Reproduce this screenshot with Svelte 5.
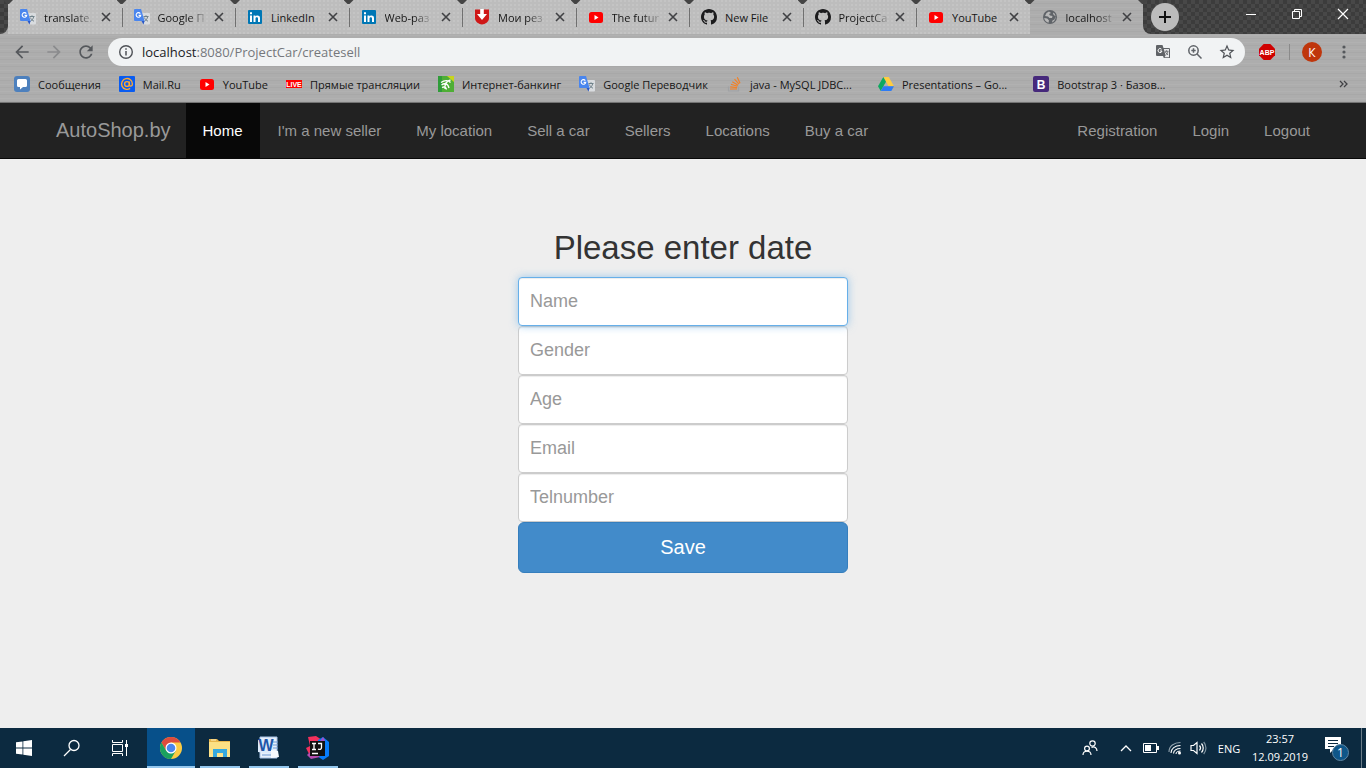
<script>
  const tabs = [
    { title: 'translate.', icon: 'translate', fade: true },
    { title: 'Google П', icon: 'translate', fade: true },
    { title: 'LinkedIn', icon: 'linkedin' },
    { title: 'Web-раз', icon: 'linkedin', fade: true },
    { title: 'Мои рез', icon: 'rabota', fade: true },
    { title: 'The futur', icon: 'youtube', fade: true },
    { title: 'New File', icon: 'github' },
    { title: 'ProjectCa', icon: 'github', fade: true },
    { title: 'YouTube', icon: 'youtube' },
    { title: 'localhost', icon: 'globe', fade: true, active: true }
  ];
  const bookmarks = [
    { title: 'Сообщения', icon: 'message' },
    { title: 'Mail.Ru', icon: 'mail' },
    { title: 'YouTube', icon: 'youtube' },
    { title: 'Прямые трансляции', icon: 'live' },
    { title: 'Интернет-банкинг', icon: 'bank' },
    { title: 'Google Переводчик', icon: 'translate' },
    { title: 'java - MySQL JDBC...', icon: 'stack', wide: true },
    { title: 'Presentations – Go...', icon: 'drive', wide: true },
    { title: 'Bootstrap 3 · Базов...', icon: 'bootstrap' }
  ];
  const links = ["I'm a new seller", 'My location', 'Sell a car', 'Sellers', 'Locations', 'Buy a car'];
  const account = ['Registration', 'Login', 'Logout'];
  const fields = ['Name', 'Gender', 'Age', 'Email', 'Telnumber'];
</script>

{#snippet icon(name)}
  <svg class="ico" viewBox="0 0 16 16" aria-hidden="true">
    {#if name === 'translate'}
      <path d="M6.500 4H15a1 1 0 0 1 1 1v9.500a1 1 0 0 1-1 1H10z" fill="#d9dcdf" />
      <path d="M9.500 7.500h5M12 6.300v1.200M10.300 8.500c.8 1.800 2.200 3 3.700 3.700M13.700 7.700c-.4 2-1.600 3.600-3.200 4.500" stroke="#71838b" stroke-width="1" fill="none" />
      <path d="M1 0h6l3.600 12H1a1 1 0 0 1-1-1V1a1 1 0 0 1 1-1z" fill="#4a86ee" />
      <path d="M7.500 12h3.100L9.500 15.500z" fill="#2a58c8" />
      <path d="M6.300 4.600a2.300 2.300 0 1 0 .4 1.800H4.600" stroke="#fff" stroke-width="1.100" fill="none" />
    {:else if name === 'linkedin'}
      <rect x="1" y="1" width="14" height="14" rx="1" fill="#0077b5" />
      <path d="M3 6.500h2V13H3zM3 3.200h2v2H3zM6.500 6.500h1.900v.9c.9-1.500 4.600-1.600 4.600 1.500V13h-2V9.500c0-1.900-2.500-1.700-2.500 0V13h-2z" fill="#fff" />
    {:else if name === 'rabota'}
      <path d="M1 .5h14V9c0 4-4 6.200-7 6.500C5 15.200 1 13 1 9z" fill="#cf1717" />
      <path d="M6.200 0h3.600v5H13L8 11 3 5h3.200z" fill="#fff" />
    {:else if name === 'youtube'}
      <rect x="1" y="3" width="14" height="11" rx="2.500" fill="#f00" />
      <path d="M6.500 6v5l4-2.500z" fill="#fff" />
    {:else if name === 'github'}
      <path fill="#1b1b1d" d="M8 0C3.580 0 0 3.580 0 8c0 3.540 2.290 6.530 5.470 7.590.4.070.55-.17.55-.38 0-.19-.01-.82-.01-1.490-2.010.37-2.530-.49-2.690-.94-.09-.23-.48-.94-.82-1.130-.28-.15-.68-.52-.01-.53.63-.01 1.080.58 1.230.82.72 1.210 1.870.87 2.330.66.070-.52.28-.87.51-1.070-1.780-.2-3.640-.89-3.640-3.950 0-.87.31-1.590.82-2.150-.08-.2-.36-1.020.08-2.120 0 0 .67-.21 2.200.82.64-.18 1.320-.27 2-.27.68 0 1.360.09 2 .27 1.530-1.040 2.200-.82 2.200-.82.44 1.100.16 1.920.08 2.120.51.56.82 1.270.82 2.150 0 3.070-1.870 3.750-3.650 3.950.29.25.54.73.54 1.480 0 1.070-.01 1.930-.01 2.200 0 .21.15.46.55.38A8.013 8.013 0 0 0 16 8c0-4.420-3.580-8-8-8z" />
    {:else if name === 'globe'}
      <circle cx="8" cy="8" r="7" fill="#5f6368" />
      <path d="M7 2.500 4.500 4 3 7l3 .5 1.500 1.500H10l.5-2-2.500-.5L7 5l2-1zM2.200 9l3 .5 1.800 2L6.500 13.800A6 6 0 0 1 2.200 9zM11.500 3.500 11 5l2.500 2.500-1 3-2 1L10 13.500a6 6 0 0 0 1.500-10z" fill="#b8b8b8" />
    {:else if name === 'message'}
      <rect width="16" height="16" rx="3" fill="#4d80bd" />
      <path d="M4.500 3h7A1.500 1.500 0 0 1 13 4.500v5a1.500 1.500 0 0 1-1.500 1.500H9l-3 2.500V11H4.500A1.500 1.500 0 0 1 3 9.500v-5A1.500 1.500 0 0 1 4.500 3z" fill="#fff" />
    {:else if name === 'mail'}
      <rect width="16" height="16" rx="1" fill="#0a5cf0" />
      <circle cx="8" cy="8" r="2.400" fill="none" stroke="#ffa930" stroke-width="1.400" />
      <path d="M10.400 5.500v3.300c0 1.900 3 1.900 3-.8a5.400 5.400 0 1 0-2.300 4.400" fill="none" stroke="#ffa930" stroke-width="1.400" />
    {:else if name === 'live'}
      <rect y="4" width="16" height="8" fill="#f00" />
      <text x="8" y="10.500" text-anchor="middle" font-size="7" font-weight="700" fill="#fff" font-family="Liberation Sans, sans-serif">LIVE</text>
    {:else if name === 'bank'}
      <rect width="16" height="16" fill="#4eae35" />
      <path d="M9 0h7v6z" fill="#c8d51c" />
      <path d="M0 0h4v16H0z" fill="#2f9c39" />
      <path d="M3 6.500c4-3 8-2 9.500 0M3.500 9C6 7 10 7 11 12M4 11.500c2-1 4-.5 4.500 2M12.500 4c-4 1-6 4-5.500 9" fill="none" stroke="#fff" stroke-width="1.300" />
    {:else if name === 'stack'}
      <path d="M2.500 10.500V15h10v-4.500" stroke="#a0a2a5" stroke-width="1.200" fill="none" />
      <path d="M4 13h7M4.200 10.800l6.900.8M4.900 8.300l6.600 2M6.300 5.700l5.800 3.500M8.500 3.200l4.500 5M11.300 1.200l2.700 6" stroke="#f48024" stroke-width="1.200" />
    {:else if name === 'drive'}
      <path d="M5.300 1h5.400L16 10.200h-5.400z" fill="#ffcd40" />
      <path d="M5.300 1 8 5.700 2.700 15 0 10.300z" fill="#0da960" />
      <path d="M5.400 10.300H16L13.300 15H2.700z" fill="#2d7bf4" />
    {:else if name === 'bootstrap'}
      <rect width="16" height="16" rx="2" fill="#46297b" />
      <text x="8" y="12.500" text-anchor="middle" font-size="12" font-weight="700" fill="#fff" font-family="Liberation Sans, sans-serif">B</text>
    {/if}
  </svg>
{/snippet}

<div class="screen">
  <header class="browser">
    <div class="strip">
      <div class="edge"></div>
      <div class="tabs">
        {#each tabs as tab}
          <div class="tab" class:active={tab.active}>
            {@render icon(tab.icon)}
            <span class="tab-title" class:fade={tab.fade}>{tab.title}</span>
            <button class="close" aria-label="Close tab">
              <svg width="16" height="16" viewBox="0 0 16 16"><path d="m4 4 8 8M12 4l-8 8" stroke="#404144" stroke-width="1.600" /></svg>
            </button>
          </div>
        {/each}
      </div>
      <div class="window-side">
        <button class="new-tab" aria-label="New tab">
          <svg width="14" height="14" viewBox="0 0 14 14"><path d="M7 1v12M1 7h12" stroke="#111" stroke-width="2" /></svg>
        </button>
        <div class="controls">
          <button aria-label="Minimize"><svg width="12" height="12" viewBox="0 0 12 12"><path d="M1 6.500h10" stroke="#fff" /></svg></button>
          <button aria-label="Restore"><svg width="12" height="12" viewBox="0 0 12 12"><path d="M1.500 3.500h7v7h-7zM3.500 3V1.500h7v7H9" fill="none" stroke="#fff" /></svg></button>
          <button aria-label="Close"><svg width="12" height="12" viewBox="0 0 12 12"><path d="m1 1 10 10M11 1 1 11" stroke="#fff" stroke-width="1.200" /></svg></button>
        </div>
      </div>
    </div>

    <div class="toolbar">
      <button class="tool" aria-label="Back"><svg width="20" height="20" viewBox="0 0 24 24"><path fill="#55585c" d="M20 11H7.830l5.590-5.590L12 4l-8 8 8 8 1.410-1.410L7.830 13H20z" /></svg></button>
      <button class="tool" aria-label="Forward"><svg width="20" height="20" viewBox="0 0 24 24"><path fill="#8a8b8d" d="m12 4-1.410 1.410L16.170 11H4v2h12.170l-5.580 5.590L12 20l8-8z" /></svg></button>
      <button class="tool" aria-label="Reload"><svg width="20" height="20" viewBox="0 0 24 24"><path fill="#55585c" d="M17.650 6.350C16.200 4.900 14.210 4 12 4c-4.420 0-7.990 3.580-7.990 8s3.570 8 7.990 8c3.730 0 6.840-2.550 7.730-6h-2.080c-.82 2.330-3.040 4-5.650 4-3.310 0-6-2.690-6-6s2.690-6 6-6c1.660 0 3.140.69 4.220 1.780L13 11h7V4z" /></svg></button>
      <div class="address">
        <svg width="16" height="16" viewBox="0 0 16 16"><circle cx="8" cy="8" r="6.300" fill="none" stroke="#4f5257" stroke-width="1.400" /><path d="M8 7v4.500M8 4.300v1.500" stroke="#4f5257" stroke-width="1.500" /></svg>
        <span class="url"><b>localhost</b>:8080/ProjectCar/createsell</span>
        <button class="tool" aria-label="Translate page"><svg width="16" height="16" viewBox="0 0 16 16"><path d="M2 1h5.500l1 3H14a1 1 0 0 1 1 1v9H8.800L8 12H2a1 1 0 0 1-1-1V2a1 1 0 0 1 1-1z" fill="#606367" /><path d="M8.800 5H14v8.200H9.500l1.100-1.700z" fill="#e9eaec" /><path d="M9.800 7.300h3.700M11.600 6.300v1M10.300 8l2.700 3M12.900 7.800c-.4 1.500-1 2.200-2 2.900" fill="none" stroke="#606367" stroke-width=".9" /><path d="M6.500 5.200A2 2 0 1 0 7 7H5" fill="none" stroke="#fff" /></svg></button>
        <button class="tool" aria-label="Zoom"><svg width="16" height="16" viewBox="0 0 16 16"><path d="m9.800 9.800 4.700 4.700M6.500 4.300v4.400M4.300 6.500h4.400" stroke="#5f6368" stroke-width="1.500" /><circle cx="6.500" cy="6.500" r="4.700" fill="none" stroke="#5f6368" stroke-width="1.500" /></svg></button>
        <button class="tool" aria-label="Bookmark this page"><svg width="18" height="18" viewBox="0 0 24 24"><path fill="#4f5257" d="m22 9.240-7.190-.62L12 2 9.190 8.630 2 9.240l5.460 4.730L5.820 21 12 17.270 18.180 21l-1.630-7.030zM12 15.400l-3.760 2.270 1-4.280-3.320-2.880 4.380-.38L12 6.100l1.710 4.040 4.380.38-3.320 2.880 1 4.280z" /></svg></button>
      </div>
      <button class="tool abp" aria-label="Adblock Plus"><svg width="16" height="16" viewBox="0 0 16 16"><path d="M4.700 0h6.600L16 4.700v6.600L11.300 16H4.700L0 11.300V4.700z" fill="#cf0000" /><text x="8" y="10.500" text-anchor="middle" font-size="7" font-weight="700" fill="#fff" font-family="Liberation Sans, sans-serif">ABP</text></svg></button>
      <span class="divider"></span>
      <button class="avatar" aria-label="Profile">К</button>
      <button class="tool menu" aria-label="Menu"><svg width="4" height="16" viewBox="0 0 4 16"><g fill="#55585c"><circle cx="2" cy="3" r="1.600" /><circle cx="2" cy="8" r="1.600" /><circle cx="2" cy="13" r="1.600" /></g></svg></button>
    </div>

    <nav class="bookmarks" aria-label="Bookmarks">
      {#each bookmarks as mark}
        <a href="#bookmark" class:wide={mark.wide}>{@render icon(mark.icon)}<span>{mark.title}</span></a>
      {/each}
      <button class="more" aria-label="More bookmarks"><svg width="10" height="8" viewBox="0 0 10 8"><path d="m1 1 3 3-3 3M5 1l3 3-3 3" fill="none" stroke="#404144" stroke-width="1.300" /></svg></button>
    </nav>
  </header>

  <nav class="navbar">
    <a class="brand" href="#top">AutoShop.by</a>
    <div class="links">
      <a class="current" href="#home">Home</a>
      {#each links as link}<a href="#page">{link}</a>{/each}
    </div>
    <div class="links account">
      {#each account as link}<a href="#account">{link}</a>{/each}
    </div>
  </nav>

  <main>
    <form onsubmit={(e) => e.preventDefault()}>
      <h2>Please enter date</h2>
      {#each fields as field, i}
        <input type="text" placeholder={field} aria-label={field} class:focused={i === 0} />
      {/each}
      <button type="submit">Save</button>
    </form>
  </main>

  <footer class="taskbar">
    <button aria-label="Start"><svg width="16" height="16" viewBox="0 0 16 16"><path d="M0 2.300 6.500 1.400v6.200H0zM7.300 1.300 16 0v7.600H7.300zM0 8.400h6.500v6.200L0 13.700zM7.300 8.400H16V16l-8.700-1.300z" fill="#fff" /></svg></button>
    <button aria-label="Search"><svg width="18" height="18" viewBox="0 0 18 18"><circle cx="11" cy="6.500" r="5" fill="none" stroke="#fff" stroke-width="1.300" /><path d="M7.500 10.500 1 17" stroke="#fff" stroke-width="1.300" /></svg></button>
    <button aria-label="Task view"><svg width="18" height="16" viewBox="0 0 18 16"><path d="M1.500 4.500h10v7h-10zM1.500 0v2.500h10V0M1.500 16v-2.500h10V16M15.500 0v16" fill="none" stroke="#fff" /><path d="M14 4h3v3h-3z" fill="#fff" /></svg></button>
    <div class="apps">
      <button class="open front" aria-label="Chrome">
        <svg width="24" height="24" viewBox="0 0 24 24"><circle cx="12" cy="12" r="11" fill="#fbcb43" /><path d="M2.470 6.500A11 11 0 0 1 21.530 6.500H12L7.240 14.750z" fill="#dd4b3e" /><path d="M2.470 6.500A11 11 0 0 0 12 23l4.760-8.250L12 17.500l-4.760-2.750z" fill="#1aa15f" /><circle cx="12" cy="12" r="5.500" fill="#fff" /><circle cx="12" cy="12" r="4.300" fill="#4a86ee" /></svg>
      </button>
      <button class="open" aria-label="Explorer">
        <svg width="24" height="24" viewBox="0 0 24 24"><path d="M1 3h8l2 2h11v16H1z" fill="#e8b64c" /><path d="M1 8h21v13H1z" fill="#fde58f" /><path d="M1 6h21v12H1z" fill="#fce084" /><path d="M3 4h5" stroke="#fff3c0" /><path d="M5 13h14v8h-4v-4h-6v4H5z" fill="#35a9df" /></svg>
      </button>
      <button class="open" aria-label="Word">
        <svg width="24" height="24" viewBox="0 0 24 24"><path d="M3 1h17v21H3z" fill="#e8f0fb" stroke="#a9c4e8" /><path d="M16 6h5M16 9h5M16 12h5M5 19h12" stroke="#6d98d3" /><path d="M1 4 16 2v16L1 16z" fill="#dceafb" /><text x="9" y="15" text-anchor="middle" font-size="16" font-weight="700" fill="#1f56a8" font-family="Liberation Sans, sans-serif">W</text><path d="m14 14 7 1 1 6-8 1z" fill="#f8fbff" /></svg>
      </button>
      <button class="open" aria-label="IntelliJ IDEA">
        <svg width="24" height="24" viewBox="0 0 24 24"><path d="M2 1 10 0 16 4 4 20 0 12 4 10z" fill="#f4305c" /><path d="M12 4 17 1l6 5v14l-6 4-6-4z" fill="#087cfa" /><path d="m14 5 3-4 2 3-2 4z" fill="#a44fc4" /><path d="M1 19 6 14l8 7-9 2z" fill="#b54db0" /><path d="M4 5h15v15H4z" fill="#111" /><path d="M6 17.500h6" stroke="#fff" stroke-width="1.500" /><path d="M6 7.500h4M8 7.500v6M6 13.500h4M12 7.500h3.500v4c0 2-2 2.400-3.500 1.500" stroke="#fff" stroke-width="1.300" fill="none" /></svg>
      </button>
    </div>
    <div class="tray">
      <button class="people" aria-label="People"><svg width="16" height="16" viewBox="0 0 16 16"><g fill="none" stroke="#fff" stroke-width="1.200"><circle cx="10.500" cy="3.500" r="2.700" /><circle cx="5" cy="8.500" r="2.400" /><path d="M1 15c0-5 8-5 8 0M9.500 7.500c3-1.500 5.500.5 5.500 3.500" /></g></svg></button>
      <button class="icon26" aria-label="Show hidden icons"><svg width="12" height="8" viewBox="0 0 12 8"><path d="m1 7 5-5 5 5" fill="none" stroke="#fff" stroke-width="1.300" /></svg></button>
      <button class="icon24" aria-label="Battery"><svg width="16" height="10" viewBox="0 0 16 10"><path d="M.5.500h13v9H.5z" fill="none" stroke="#fff" /><path d="M2 2h6v6H2zM14 3h2v4h-2z" fill="#fff" /></svg></button>
      <button class="icon24" aria-label="Network"><svg width="14" height="14" viewBox="0 0 14 14"><g fill="none" stroke="#fff" stroke-width="1.100"><path d="M1 11C1 5 6 1.500 12.500 1.500" stroke="#93a4af" /><path d="M3 12c0-4.500 4-7.500 9.500-7.500M5.500 12.500c0-3 3-5 7-5M8 13c0-1.500 2-3 4.500-3" /></g><circle cx="11.500" cy="12" r="1.500" fill="#fff" /></svg></button>
      <button class="icon24" aria-label="Volume"><svg width="18" height="14" viewBox="0 0 18 14"><g fill="none" stroke="#fff" stroke-width="1.200"><path d="M1 4.500h2.500L7 1.500v11l-3.500-3H1z" /><path d="M9.500 4.500c1.300 1.500 1.300 3.500 0 5M11.500 2.500c2.300 2.500 2.300 6.500 0 9" /><path d="M13.700 1c3 3.500 3 8.500 0 12" stroke="#7f93a0" /></g></svg></button>
      <button class="lang">ENG</button>
      <button class="clock"><span>23:57</span><span>12.09.2019</span></button>
      <button class="notice" aria-label="Notifications">
        <svg width="24" height="24" viewBox="0 0 24 24"><path d="M0 0h16v12H9l-4 4v-4H0z" fill="#fff" /><path d="M3 3.500h10M3 6.500h10M3 9.500h6" stroke="#0c2a40" /><circle cx="15.500" cy="15.500" r="8" fill="#0f5688" stroke="#5f86a3" /><text x="15.500" y="20" text-anchor="middle" font-size="12" fill="#fff" font-family="Open Sans, sans-serif">1</text></svg>
      </button>
      <span class="desktop"></span>
    </div>
  </footer>
</div>

<style>
  :global(body) {
    margin: 0;
  }
  .screen {
    display: flex;
    flex-direction: column;
    min-height: 100vh;
    font-family: 'Open Sans', 'Noto Sans', sans-serif;
    font-size: 11px;
  }
  .screen, .screen * {
    box-sizing: border-box;
  }
  button {
    display: flex;
    align-items: center;
    justify-content: center;
    padding: 0;
    border: 0;
    background: none;
    font: inherit;
    color: inherit;
  }
  a {
    color: inherit;
    text-decoration: none;
  }
  svg {
    display: block;
    flex: none;
  }
  .ico {
    width: 16px;
    height: 16px;
  }

  .browser {
    color: #161616;
    border-bottom: 1px solid #747474;
    background:
      repeating-linear-gradient(180deg, rgba(255, 255, 255, 0.05) 0 1px, transparent 1px 3px, rgba(0, 0, 0, 0.03) 3px 4px, transparent 4px 7px),
      #adadad;
  }
  .strip {
    display: flex;
    height: 34px;
  }
  .edge, .window-side {
    background:
      repeating-conic-gradient(#3c3c3c 0 25%, #484848 0 50%) 0 0 / 8px 8px;
  }
  .edge {
    flex: 0 0 8px;
    border-bottom-right-radius: 8px;
  }
  .tabs {
    display: flex;
    flex: 1;
    min-width: 0;
  }
  .tab {
    position: relative;
    display: flex;
    flex: 1 1 0;
    align-items: center;
    min-width: 0;
    padding: 0 8px 0 12px;
    background:
      radial-gradient(circle at 1px 1px, #c4c4c4 0 1px, transparent 1px) 0 0 / 4px 4px,
      #bdbdbd;
  }
  .tab.active {
    background: none;
  }
  .tab::before, .tab.active::after {
    content: '';
    position: absolute;
    top: 0;
    left: -5px;
    width: 10px;
    height: 4px;
    background: #444;
    clip-path: polygon(0 0, 100% 0, 60% 100%, 40% 100%);
  }
  .tab.active::after {
    right: -5px;
    left: auto;
  }
  .tab:not(.active) + .tab:not(.active)::after {
    content: '';
    position: absolute;
    top: 8px;
    bottom: 7px;
    left: 0;
    width: 1px;
    background: #707070;
  }
  .tab-title {
    min-width: 0;
    margin-left: 8px;
    overflow: hidden;
    white-space: nowrap;
  }
  .fade {
    mask-image: linear-gradient(90deg, #000 65%, rgba(0, 0, 0, 0.2) 100%);
  }
  .close {
    flex: none;
    width: 16px;
    height: 16px;
    margin-left: auto;
  }
  .window-side {
    display: flex;
    flex: 0 0 223px;
    align-items: flex-start;
    justify-content: space-between;
    padding-left: 8px;
    border-bottom-left-radius: 8px;
  }
  .new-tab {
    width: 28px;
    height: 28px;
    margin-top: 3px;
    border-radius: 50%;
    background: #bcbcbc;
  }
  .controls {
    display: flex;
  }
  .controls button {
    width: 46px;
    height: 28px;
  }

  .toolbar {
    display: flex;
    align-items: center;
    height: 36px;
    padding: 0 10px 0 6px;
  }
  .tool {
    width: 32px;
    height: 28px;
  }
  .address {
    display: flex;
    flex: 1;
    align-items: center;
    height: 28px;
    margin-left: 6px;
    padding: 0 2px 0 10px;
    border-radius: 14px;
    background: #f1f3f4;
  }
  .url {
    flex: 1;
    padding-left: 8px;
    font-size: 13px;
    color: #75787c;
  }
  .url b {
    font-weight: 400;
    color: #202124;
  }
  .abp {
    margin-left: 6px;
  }
  .divider {
    width: 1px;
    height: 16px;
    margin: 0 12px 0 6px;
    background: #8a8a8a;
  }
  .avatar {
    width: 20px;
    height: 20px;
    border-radius: 50%;
    background: #bf360c;
    color: #fff;
    font-size: 12px;
  }
  .menu {
    width: 24px;
    margin-left: 10px;
  }

  .bookmarks {
    display: flex;
    align-items: center;
    gap: 18px;
    height: 32px;
    padding: 0 17px 4px 14px;
    white-space: nowrap;
  }
  .bookmarks a {
    display: flex;
    align-items: center;
    gap: 8px;
  }
  .bookmarks .wide {
    margin-right: 8px;
  }
  .more {
    margin-left: auto;
  }

  .navbar {
    display: flex;
    height: 56px;
    padding: 0 39px;
    border-bottom: 1px solid #080808;
    background: #222;
    color: #999;
    font: 15px 'Liberation Sans', Arial, sans-serif;
  }
  .navbar a {
    display: flex;
    align-items: center;
    padding: 0 17px;
    white-space: nowrap;
  }
  .navbar .brand {
    padding-right: 15px;
    font-size: 20px;
  }
  .navbar .current {
    background: #080808;
    color: #fff;
  }
  .links {
    display: flex;
    gap: 1px;
  }
  .account {
    margin-left: auto;
  }

  main {
    flex: 1;
    padding: 71px 16px 16px;
    background: #eee;
    font-family: 'Liberation Sans', Arial, sans-serif;
  }
  form {
    display: flex;
    flex-direction: column;
    max-width: 330px;
    margin: 0 auto;
  }
  h2 {
    margin: 0 0 11px;
    font-size: 33px;
    font-weight: 400;
    line-height: 36px;
    text-align: center;
    color: #333;
  }
  input {
    height: 49px;
    padding: 0 11px;
    border: 1px solid #ccc;
    border-radius: 4px;
    background: #fff;
    box-shadow: inset 0 1px 1px rgba(0, 0, 0, 0.075);
    color: #555;
    font: 18px 'Liberation Sans', Arial, sans-serif;
  }
  input::placeholder {
    color: #999;
    opacity: 1;
  }
  .focused {
    position: relative;
    border-color: #66afe9;
    box-shadow: inset 0 1px 1px rgba(0, 0, 0, 0.075), 0 0 9px rgba(102, 175, 233, 0.6);
  }
  form button {
    height: 51px;
    border: 1px solid #357ebd;
    border-radius: 6px;
    background: #428bca;
    color: #fff;
    font-size: 20px;
  }

  .taskbar {
    display: flex;
    height: 40px;
    background: #0c2a40;
    color: #fff;
  }
  .taskbar button {
    width: 48px;
    height: 40px;
  }
  .apps {
    display: flex;
    gap: 1px;
    margin-left: 3px;
  }
  .apps .open {
    position: relative;
  }
  .open::after {
    content: '';
    position: absolute;
    right: 4px;
    bottom: 0;
    left: 4px;
    height: 2px;
    background: #94c7ee;
  }
  .apps .front {
    background: #07508a;
  }
  .front::after {
    right: 0;
    left: 0;
  }
  .tray {
    display: flex;
    margin-left: auto;
  }
  .tray .people {
    width: 46px;
  }
  .tray .icon26 {
    width: 26px;
  }
  .tray .icon24 {
    width: 24px;
  }
  .tray .lang {
    width: 36px;
  }
  .tray .clock {
    flex-direction: column;
    width: 66px;
    line-height: 18px;
  }
  .tray .notice {
    padding-top: 2px;
  }
  .desktop {
    width: 5px;
    border-left: 1px solid #6a7c88;
  }
</style>
